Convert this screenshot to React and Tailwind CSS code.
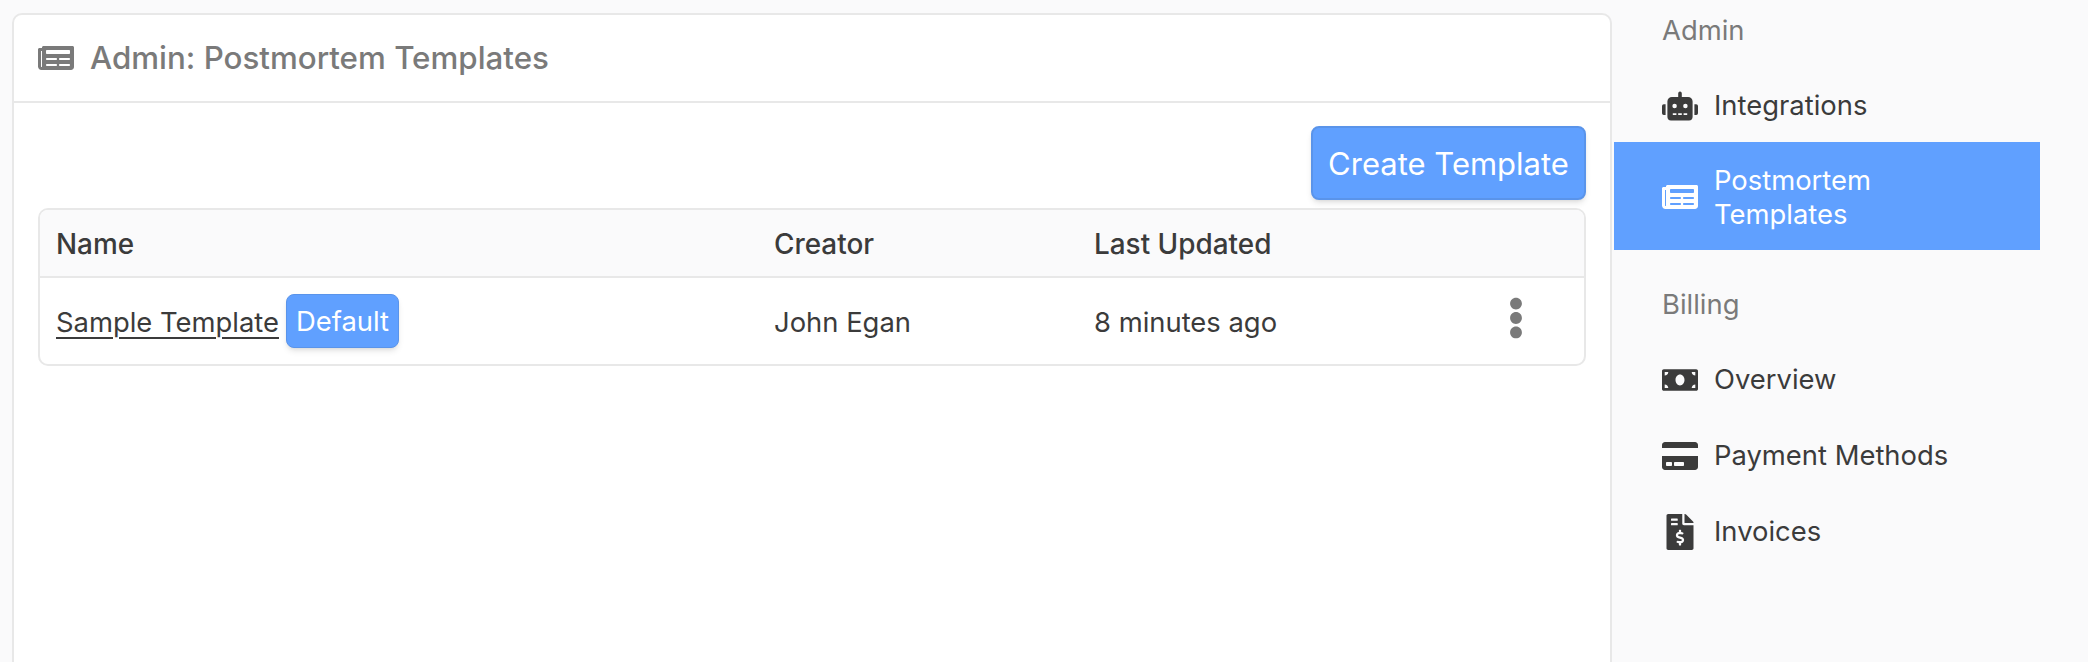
import { FaNewspaper, FaRobot, FaMoneyBill, FaCreditCard, FaFileInvoiceDollar, FaEllipsisV } from "react-icons/fa"

const font = { fontFamily: "Inter, sans-serif" }

function NavItem({ icon, children }) {
  return (
    <div className="flex items-center h-[76px] pl-[48px] gap-[16px] text-[27.4px] text-[#3b3b3b]">
      <span className="w-[36px] flex justify-center text-[#3b3b3b]">{icon}</span>
      <span>{children}</span>
    </div>
  )
}

function App() {
  return (
    <div className="h-[662px] overflow-hidden bg-[#fafafb] flex font-['Inter',sans-serif]" style={font}>

      <div className="w-[1600px] ml-[12px] mt-[13px] h-[700px] shrink-0 bg-white border-2 border-[#e8e8e8] rounded-[10px]">

        <div className="h-[88px] flex items-center gap-[16px] pl-[24px] border-b-2 border-[#e8e8e8] text-[#7a7a7a]">
          <FaNewspaper className="w-[36px] h-[36px]" />
          <span className="text-[31.3px] font-medium">Admin: Postmortem Templates</span>
        </div>

        <div className="px-[24px] pt-[23px]">

          <div className="flex justify-end">
            <button className="h-[74px] w-[275px] pt-[2px] bg-[#60a0ff] border-2 border-[#5a94ea] rounded-[8px] text-white text-[31px] shadow-md">
              Create Template
            </button>
          </div>

          <div className="mt-[8px] border-2 border-[#e8e8e8] rounded-[10px] overflow-hidden text-[#3b3b3b] text-[27.4px]">

            <div className="grid grid-cols-[718px_320px_1fr] items-center h-[68px] pl-[16px] pt-[3px] bg-[#fafafb] border-b-2 border-[#e8e8e8] font-medium text-[27.9px]">
              <span>Name</span>
              <span>Creator</span>
              <span>Last Updated</span>
            </div>

            <div className="grid grid-cols-[718px_320px_1fr_89px] items-center h-[86px] pl-[16px]">
              <div className="flex items-center gap-[7px]">
                <span className="pt-[3px] underline decoration-2 underline-offset-[5px]">Sample Template</span>
                <span className="h-[54px] px-[9px] pt-[2px] flex items-center bg-[#60a0ff] border border-[#5a94ea] rounded-[8px] text-white shadow-md">
                  Default
                </span>
              </div>
              <span className="pt-[3px]">John Egan</span>
              <span className="pt-[3px]">8 minutes ago</span>
              <FaEllipsisV className="w-[42px] h-[42px] -mt-[6px] text-[#7a7a7a]" />
            </div>

          </div>

        </div>

      </div>

      <div className="w-[426px] ml-[2px] shrink-0">

        <div className="h-[62px] flex items-center pl-[48px] text-[27.4px] text-[#7a7a7a]">Admin</div>

        <div className="pt-[6px]">
          <NavItem icon={<FaRobot className="w-[36px] h-[36px]" />}>Integrations</NavItem>
        </div>

        <div className="-mt-[2px] h-[108px] bg-[#60a0ff] text-white flex items-center pl-[48px] gap-[16px] text-[27.4px] leading-[34px]">
          <span className="w-[36px] flex justify-center pt-[2px]"><FaNewspaper className="w-[36px] h-[36px]" /></span>
          <span className="pt-[2px]">Postmortem<br />Templates</span>
        </div>

        <div className="h-[54px] mt-[28px] mb-[10px] flex items-center pl-[48px] text-[27.4px] text-[#7a7a7a]">Billing</div>

        <NavItem icon={<FaMoneyBill className="w-[36px] h-[36px]" />}>Overview</NavItem>
        <NavItem icon={<FaCreditCard className="w-[36px] h-[36px]" />}>Payment Methods</NavItem>
        <NavItem icon={<FaFileInvoiceDollar className="w-[36px] h-[36px]" />}>Invoices</NavItem>

      </div>

    </div>
  )
}

export default App
